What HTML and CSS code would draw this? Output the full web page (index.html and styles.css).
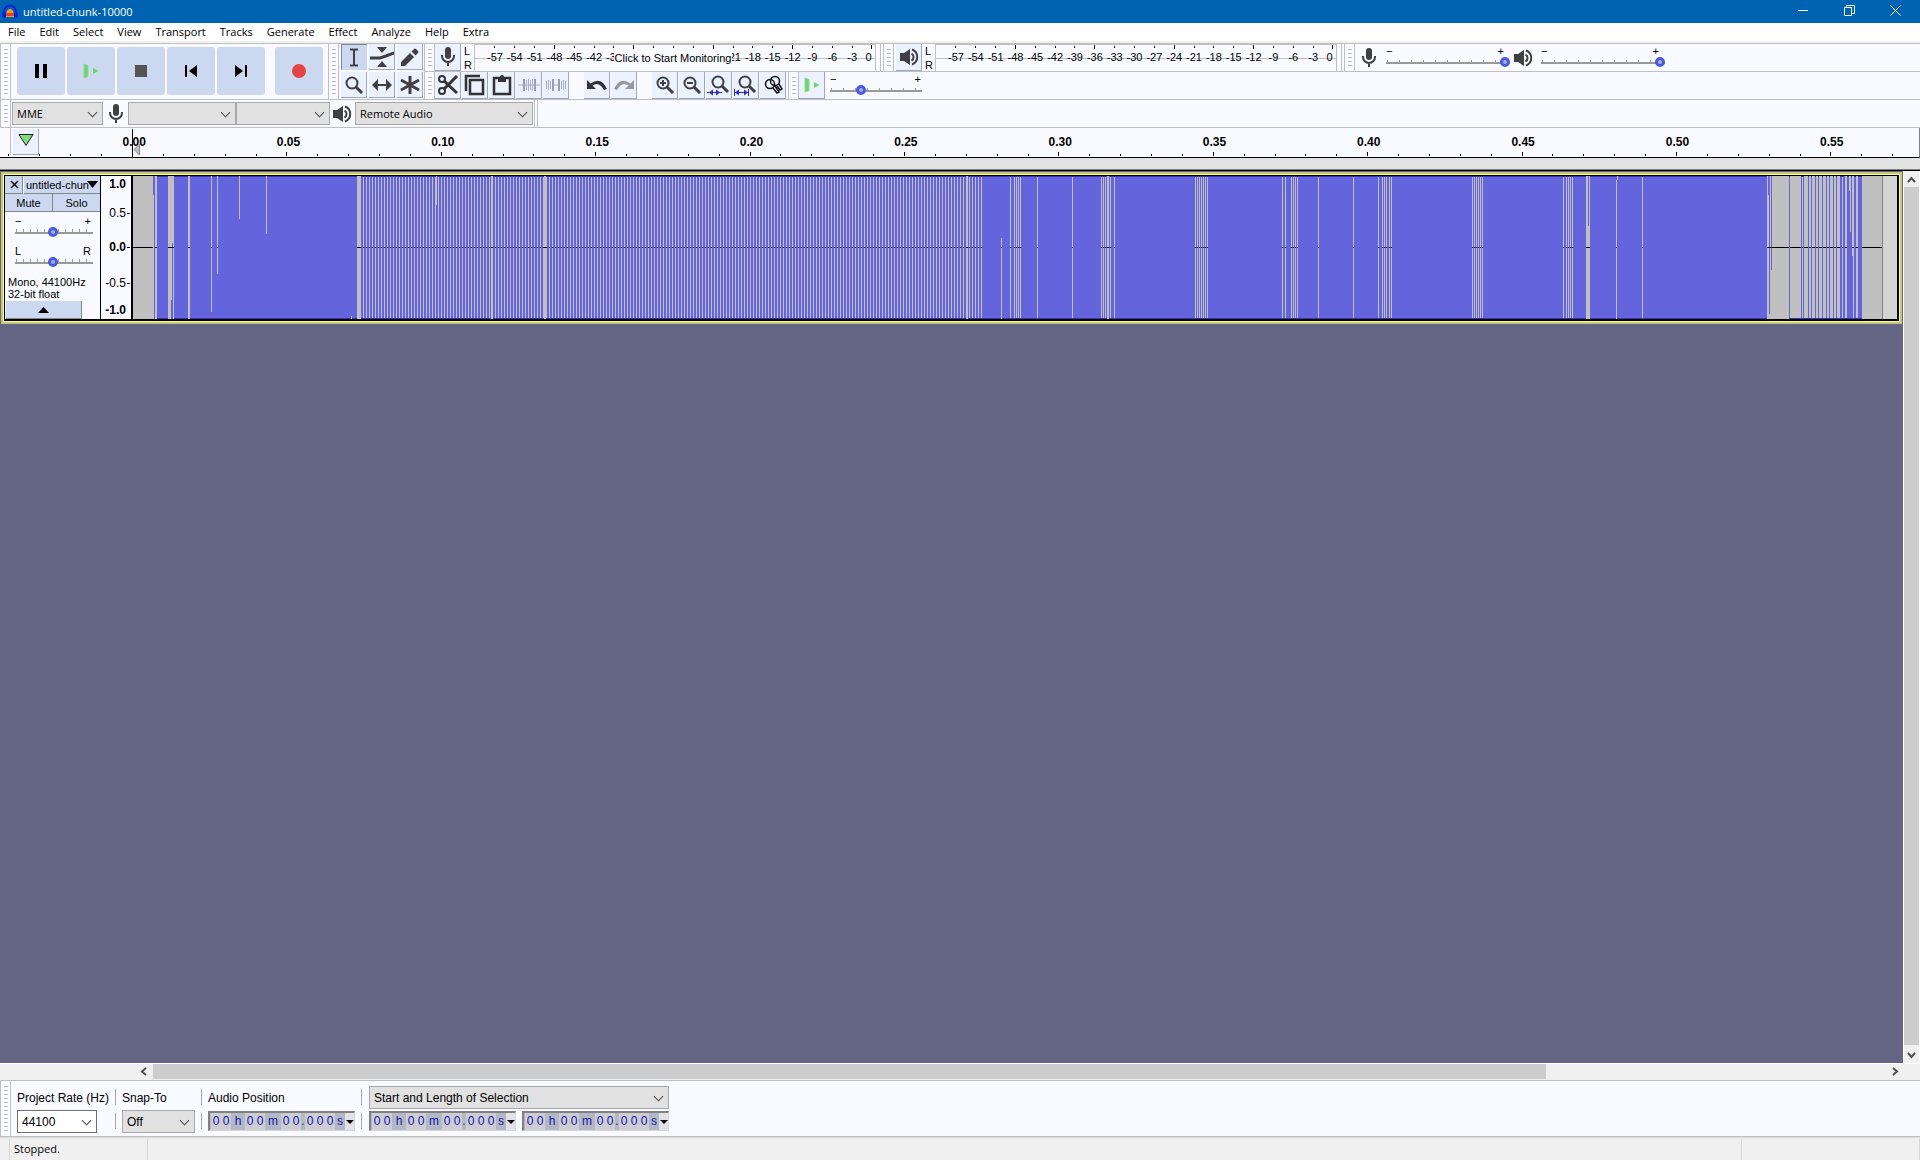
FILE: index.html
```html
<!DOCTYPE html>
<html lang="en">
<head>
<meta charset="utf-8">
<title>untitled-chunk-10000</title>
<link rel="stylesheet" href="styles.css">
</head>
<body>
<svg class="defs" aria-hidden="true">
  <symbol id="mic" viewBox="0 0 16 20"><rect x="5" y="0" width="6" height="12" rx="3" fill="#404040"/><path d="M2 8v1a6 6 0 0 0 12 0V8M8 15v4" fill="none" stroke="#404040" stroke-width="2"/></symbol>
  <symbol id="speaker" viewBox="0 0 20 18"><path d="M1 5h4l6-4v16l-6-4H1z" fill="#404040"/><path d="M12.500 5.500a4 4 0 0 1 0 7" fill="none" stroke="#404040" stroke-width="2"/><path d="M13 1.500a8 8 0 0 1 0 15" fill="none" stroke="#404040" stroke-width="2"/></symbol>
  <symbol id="play" viewBox="0 0 16 16"><path d="M1 1l4 1.500v11L1 15z" fill="#6cd46c" stroke="#8fd98f"/><path d="M10 5l5.500 3-5.500 3z" fill="#6cd46c"/></symbol>
  <symbol id="lens" viewBox="0 0 20 20"><circle cx="8" cy="8" r="5.500" fill="none" stroke="#404040" stroke-width="2"/><path d="M12 12l6 6" stroke="#404040" stroke-width="3"/></symbol>
</svg>
<div class="app">
  <header class="titlebar">
    <svg class="logo" width="16" height="16" viewBox="0 0 16 16"><path d="M2 11V8a6 6.500 0 0 1 12 0v3" fill="none" stroke="#0a1ee6" stroke-width="2"/><rect x="0" y="8" width="4" height="6" rx="2" fill="#0a1ee6"/><rect x="12" y="8" width="4" height="6" rx="2" fill="#0a1ee6"/><path d="M4 13q0-8 4-8t4 8z" fill="#f5a21b"/><path d="M4 9h8v3H4z" fill="#e8411c"/></svg>
    <h1>untitled-chunk-10000</h1>
    <button class="win" aria-label="Minimize"><svg width="11" height="11" viewBox="0 0 11 11"><path d="M0 5.500h10" stroke="#fff"/></svg></button>
    <button class="win" aria-label="Restore"><svg width="11" height="11" viewBox="0 0 11 11"><path d="M.5 2.500h7v8h-7zM2.500 2.500v-2h8v8h-3" fill="none" stroke="#fff"/></svg></button>
    <button class="win" aria-label="Close"><svg width="11" height="11" viewBox="0 0 11 11"><path d="M.5.5l10 10M10.500.5l-10 10" stroke="#fff"/></svg></button>
  </header>
  <nav class="menubar">
    <button>File</button><button>Edit</button><button>Select</button><button>View</button><button>Transport</button><button>Tracks</button><button>Generate</button><button>Effect</button><button>Analyze</button><button>Help</button><button>Extra</button>
  </nav>

  <div class="dock">
    <section class="bar tall" aria-label="Transport">
      <i class="grab"></i>
      <div class="transport">
        <button aria-label="Pause"><svg width="14" height="14" viewBox="0 0 14 14"><path d="M1 0h4v14H1zM9 0h4v14H9z"/></svg></button>
        <button aria-label="Play"><svg width="16" height="16"><use href="#play"/></svg></button>
        <button aria-label="Stop"><svg width="12" height="12"><path d="M0 0h12v12H0z" fill="#555"/></svg></button>
        <button aria-label="Skip to start"><svg width="14" height="14" viewBox="0 0 14 14"><path d="M1 1h2v12H1zM13 1v12L5 7z"/></svg></button>
        <button aria-label="Skip to end"><svg width="14" height="14" viewBox="0 0 14 14"><path d="M11 1h2v12h-2zM1 1v12l8-6z"/></svg></button>
        <button class="record" aria-label="Record"><svg width="14" height="14"><circle cx="7" cy="7" r="7" fill="#e34545"/></svg></button>
      </div>
    </section>
    <section class="bar tall" aria-label="Tools">
      <i class="grab"></i>
      <div class="tools">
        <button class="tb on" aria-label="Selection"><svg width="20" height="20" viewBox="0 0 20 20"><path d="M6 2.500h3l1 1 1-1h3M6 18.500h3l1-1 1 1h3M10 3v15" fill="none" stroke="#404040" stroke-width="2"/></svg></button>
        <button class="tb" aria-label="Envelope"><svg width="26" height="22" viewBox="0 0 26 22"><path d="M8 1h10l-5 6zM8 21h10l-5-6z" fill="#404040"/><path d="M1 12h10l6-2 8-3" fill="none" stroke="#404040" stroke-width="3"/></svg></button>
        <button class="tb" aria-label="Draw"><svg width="20" height="20" viewBox="0 0 20 20"><path d="M1 19v-4l9-9 4 4-9 9zM11.500 4.500L14 2q1-1 2 0l2 2q1 1 0 2l-2.500 2.500z" fill="#404040"/></svg></button>
        <button class="tb" aria-label="Zoom"><svg width="20" height="20"><use href="#lens"/></svg></button>
        <button class="tb" aria-label="Time shift"><svg width="22" height="20" viewBox="0 0 22 20"><path d="M1 10l6-6v5h8V4l6 6-6 6v-5H7v5z" fill="#404040"/></svg></button>
        <button class="tb" aria-label="Multi-tool"><svg width="20" height="20" viewBox="0 0 20 20"><path d="M10 1v18M1 5l18 10M1 15L19 5" stroke="#404040" stroke-width="3"/></svg></button>
      </div>
    </section>
    <div class="stack">
      <div class="row">
        <section class="bar meterbar" aria-label="Recording meter">
          <i class="grab"></i>
          <button class="tb" aria-label="Record meter"><svg width="16" height="20"><use href="#mic"/></svg></button>
          <div class="lr"><span>L</span><span>R</span></div>
          <div class="meter">
            <span>-57</span><span>-54</span><span>-51</span><span class="major">-48</span><span>-45</span><span>-42</span><span>-39</span><span class="major">-36</span><span>-33</span><span>-30</span><span>-27</span><span class="major">-24</span><span>-21</span><span>-18</span><span>-15</span><span class="major">-12</span><span>-9</span><span>-6</span><span>-3</span><span class="major zero">0</span>
            <button class="monitor">Click to Start Monitoring</button>
          </div>
        </section>
        <section class="bar meterbar playback" aria-label="Playback meter">
          <i class="grab"></i>
          <button class="tb nudge" aria-label="Playback meter"><svg width="20" height="18"><use href="#speaker"/></svg></button>
          <div class="lr"><span>L</span><span>R</span></div>
          <div class="meter">
            <span>-57</span><span>-54</span><span>-51</span><span class="major">-48</span><span>-45</span><span>-42</span><span>-39</span><span class="major">-36</span><span>-33</span><span>-30</span><span>-27</span><span class="major">-24</span><span>-21</span><span>-18</span><span>-15</span><span class="major">-12</span><span>-9</span><span>-6</span><span>-3</span><span class="major zero">0</span>
          </div>
        </section>
        <section class="bar mixer" aria-label="Mixer">
          <i class="grab"></i>
          <svg class="mixicon" width="16" height="20"><use href="#mic"/></svg>
          <div class="slider vol"><div class="ends"><span>−</span><span>+</span></div><input type="range" value="100" aria-label="Recording volume"></div>
          <svg class="spk" width="20" height="18"><use href="#speaker"/></svg>
          <div class="slider vol"><div class="ends"><span>−</span><span>+</span></div><input type="range" value="100" aria-label="Playback volume"></div>
        </section>
      </div>
      <div class="row">
        <section class="bar edit" aria-label="Edit">
          <i class="grab"></i>
          <div class="group">
            <button class="tb" aria-label="Cut"><svg width="22" height="22" viewBox="0 0 22 22"><g fill="none" stroke="#333" stroke-width="2"><circle cx="5" cy="5" r="3"/><circle cx="5" cy="17" r="3"/></g><path d="M7 7l13 12M7 15L20 2" stroke="#333" stroke-width="3"/></svg></button>
            <button class="tb" aria-label="Copy"><svg width="22" height="22" viewBox="0 0 22 22"><path d="M6 6h13v14H6zM2 17V2h14" fill="none" stroke="#333" stroke-width="2.500"/></svg></button>
            <button class="tb" aria-label="Paste"><svg width="22" height="22" viewBox="0 0 22 22"><path d="M3 4h16v16H3z" fill="none" stroke="#333" stroke-width="2.500"/><path d="M7 3h2a2 2 0 0 1 4 0h2v5H7z" fill="#333"/></svg></button>
            <button class="tb" aria-label="Trim"><svg width="22" height="16" viewBox="0 0 22 16"><path d="M0 8h22" stroke="#a8aecf"/><path d="M8.500 3v10M10.500 2v12M12.500 3v10M14.500 2v12" stroke="#a8aecf"/><path d="M6 2v12M17 2v12" stroke="#999fa8" stroke-width="2"/></svg></button>
            <button class="tb" aria-label="Silence"><svg width="22" height="16" viewBox="0 0 22 16"><path d="M8 8h6M1.500 4v8M3.500 3v10M5.500 4v8M16.500 4v8M18.500 3v10M20.500 4v8" stroke="#a8aecf"/><path d="M8 2v12M14 2v12" stroke="#999fa8" stroke-width="2"/></svg></button>
          </div>
          <div class="group">
            <button class="tb" aria-label="Undo"><svg width="22" height="16" viewBox="0 0 22 16"><path d="M1 3v9h9l-3.500-3.500Q13 4 18 13l3-1Q15-1 4.500 6.500z" fill="#333"/></svg></button>
            <button class="tb" aria-label="Redo"><svg width="22" height="16" viewBox="0 0 22 16"><path d="M21 3v9h-9l3.500-3.500Q9 4 4 13l-3-1Q7-1 17.500 6.500z" fill="#999"/></svg></button>
          </div>
          <div class="group">
            <button class="tb" aria-label="Zoom in"><svg width="20" height="20" viewBox="0 0 20 20"><use href="#lens"/><path d="M5 8h6M8 5v6" stroke="#404040" stroke-width="2"/></svg></button>
            <button class="tb" aria-label="Zoom out"><svg width="20" height="20" viewBox="0 0 20 20"><use href="#lens"/><path d="M5 8h6" stroke="#404040" stroke-width="2"/></svg></button>
            <button class="tb" aria-label="Fit selection"><svg width="24" height="22" viewBox="0 0 24 22"><use href="#lens" x="3" y="0" width="20" height="20"/><path d="M0 18.500h15" stroke="#2a2ac8"/><path d="M2 18.500l4-3v6zM13 18.500l-4-3v6z" fill="#2a2ac8"/></svg></button>
            <button class="tb" aria-label="Fit project"><svg width="24" height="22" viewBox="0 0 24 22"><use href="#lens" x="3" y="0" width="20" height="20"/><path d="M0 18.500h15M.5 15v7M14.500 15v7" stroke="#2a2ac8"/><path d="M1 18.500l4-3v6zM14 18.500l-4-3v6z" fill="#2a2ac8"/></svg></button>
            <button class="tb" aria-label="Toggle zoom"><svg width="20" height="20" viewBox="0 0 20 20"><g fill="none" stroke="#111" stroke-width="1.500"><circle cx="7" cy="9" r="4.500"/><circle cx="12" cy="6" r="4.500"/><path d="M10 13l4 5 2-1-4-6M14 11l3 4 2-1-3-5"/></g></svg></button>
          </div>
        </section>
        <section class="bar" aria-label="Play at speed">
          <i class="grab"></i>
          <button class="tb" aria-label="Play at speed"><svg width="16" height="16"><use href="#play"/></svg></button>
          <div class="slider speed"><div class="ends"><span>−</span><span>+</span></div><input type="range" value="32" aria-label="Playback speed"></div>
        </section>
      </div>
    </div>
  </div>

  <section class="bar devices" aria-label="Devices">
    <i class="grab"></i>
    <label class="pick host"><select aria-label="Audio host"><option>MME</option></select></label>
    <svg class="devmic" width="16" height="20"><use href="#mic"/></svg>
    <label class="pick recdev"><select aria-label="Recording device"><option></option></select></label>
    <label class="pick channels"><select aria-label="Recording channels"><option></option></select></label>
    <svg class="devspk" width="20" height="18"><use href="#speaker"/></svg>
    <label class="pick playdev"><select aria-label="Playback device"><option>Remote Audio</option></select></label>
    <i class="tail"></i>
  </section>

  <div class="timeline">
    <svg class="ticks" viewBox="0 0 1919 29" preserveAspectRatio="none"><path id="ticks" fill="none" stroke="#000"/></svg>
    <div class="pin"><button class="tb" aria-label="Pinned play head"><svg width="16" height="14" viewBox="0 0 16 14"><path d="M1 1.500h14L8 12.500z" fill="#7fdc7f" stroke="#222"/></svg></button></div>
    <div class="times"><span>0.00</span><span>0.05</span><span>0.10</span><span>0.15</span><span>0.20</span><span>0.25</span><span>0.30</span><span>0.35</span><span>0.40</span><span>0.45</span><span>0.50</span><span>0.55</span></div>
    <svg class="cursor" width="9" height="28" viewBox="0 0 9 28"><path d="M.5 0v28" stroke="#000"/><path d="M7.500 15v11L2 20.500z" fill="#c0c0c0" stroke="#888"/></svg>
  </div>
  <div class="scrub"></div>

  <main class="workspace">
    <div class="tracks">
      <article class="track">
        <div class="panel">
          <div class="pair head"><button aria-label="Close track"><svg width="9" height="9" viewBox="0 0 9 9"><path d="M1 1l7 7M8 1L1 8" stroke="#000" stroke-width="1.500"/></svg></button><button class="name">untitled-chun<svg width="11" height="7"><path d="M0 0h11L5.500 7z"/></svg></button></div>
          <div class="pair"><button>Mute</button><button>Solo</button></div>
          <div class="slider small"><div class="ends"><span>−</span><span>+</span></div><input type="range" value="49" aria-label="Gain"></div>
          <div class="slider small"><div class="ends"><span>L</span><span>R</span></div><input type="range" value="49" aria-label="Pan"></div>
          <p>Mono, 44100Hz<br>32-bit float</p>
          <button class="collapse" aria-label="Collapse track"><svg width="11" height="6"><path d="M0 6h11L5.500 0z"/></svg></button>
        </div>
        <div class="scale"><b>1.0</b><span class="mark">0.5</span><b class="mark">0.0</b><span class="mark">-0.5</span><b>-1.0</b></div>
        <svg class="wave" viewBox="0 0 1764 143" preserveAspectRatio="none" role="img" aria-label="Waveform">
          <rect width="1764" height="143" fill="#c0c0c0"/>
          <path fill="#6464dc" d="M24 0H1729V143H24z"/>
          <path fill="#3232c8" d="M24 0H1729V1H24zM24 142H1729V143H24z"/>
          <path id="gaps" fill="#c0c0c0"/>
          <path id="peaks" fill="#6464dc"/>
          <path id="zero" fill="#000"/>
          <path fill="#3232c8" d="M1656 142H1729V143H1656z"/>
          <path fill="#808080" d="M1749 0h1v143h-1z"/><path fill="#d4d4d4" d="M1750 0h14v143h-14z"/>
        </svg>
      </article>
    </div>
    <div class="vscroll"><svg width="15" height="16" viewBox="0 0 15 16"><path d="M4 11l3.500-4 3.500 4" fill="none" stroke="#505050" stroke-width="2"/></svg><i></i><svg width="15" height="18" viewBox="0 0 15 18"><path d="M4 8l3.500 4L11 8" fill="none" stroke="#505050" stroke-width="2"/></svg></div>
  </main>
  <div class="hscroll"><svg width="16" height="15" viewBox="0 0 16 15"><path d="M9 4L5 7.500 9 11" fill="none" stroke="#505050" stroke-width="2"/></svg><div><i></i></div><svg width="16" height="15" viewBox="0 0 16 15"><path d="M6 4l4 3.500L6 11" fill="none" stroke="#505050" stroke-width="2"/></svg></div>

  <section class="bar selection" aria-label="Selection">
    <i class="grab"></i>
    <div class="field rate"><label for="rate">Project Rate (Hz)</label><span class="pick combo"><input id="rate" value="44100"></span></div>
    <div class="seps"><i></i><i></i></div>
    <div class="field snap"><label for="snap">Snap-To</label><span class="pick"><select id="snap"><option>Off</option></select></span></div>
    <div class="seps"><i></i><i></i></div>
    <div class="field"><span class="cap">Audio Position</span>
      <div class="time"><s><b>0</b><b>0</b></s><u>h</u><s><b>0</b><b>0</b></s><u class="m">m</u><s><b>0</b><b>0</b></s><u class="dot">.</u><s><b>0</b><b>0</b><b>0</b></s><u class="sec">s</u><button aria-label="Format"></button></div>
    </div>
    <div class="seps last"><i></i><i></i></div>
    <div class="field">
      <span class="pick mode"><select aria-label="Selection mode"><option>Start and Length of Selection</option></select></span>
      <div class="duo">
        <div class="time"><s><b>0</b><b>0</b></s><u>h</u><s><b>0</b><b>0</b></s><u class="m">m</u><s><b>0</b><b>0</b></s><u class="dot">.</u><s><b>0</b><b>0</b><b>0</b></s><u class="sec">s</u><button aria-label="Format"></button></div>
        <div class="time"><s><b>0</b><b>0</b></s><u>h</u><s><b>0</b><b>0</b></s><u class="m">m</u><s><b>0</b><b>0</b></s><u class="dot">.</u><s><b>0</b><b>0</b><b>0</b></s><u class="sec">s</u><button aria-label="Format"></button></div>
      </div>
    </div>
  </section>
  <footer class="status"><span class="lead"></span><span class="state">Stopped.</span><span class="msg"></span><span class="rest"></span></footer>
</div>
<script src="script.js"></script>
</body>
</html>
```
FILE: styles.css
```css
* { box-sizing: border-box; }
body { margin: 0; font: 12px/16px "Liberation Sans", Arial, sans-serif; color: #000; }
button, select, input { font: inherit; color: inherit; margin: 0; padding: 0; border: 0; border-radius: 0; background: none; }
svg { display: block; flex: none; }
.defs { position: absolute; width: 0; height: 0; }
.app { display: flex; flex-direction: column; min-height: 100vh; background: #f8faff; }

.titlebar { display: flex; align-items: center; height: 23px; background: #0063b1; color: #fff; padding: 0 2px; }
.titlebar h1 { flex: 1; margin: 0 0 0 5px; font: 11px/16px "Open Sans", sans-serif; }
.win { width: 46px; height: 23px; display: flex; justify-content: center; align-items: center; padding-bottom: 3px; }

.menubar { display: flex; gap: 14px; height: 20px; padding-left: 8px; background: #fff; border-bottom: 2px solid #f0f0f0; font: 11px/18px "Open Sans", sans-serif; }

.dock { display: flex; border-top: 1px solid #c0c0c0; }
.bar { display: flex; align-items: stretch; min-width: 0; }
.tall { height: 56px; border-bottom: 1px solid #c0c0c0; }
.grab { flex: none; width: 11px; border: solid #c0c0c0; border-width: 0 1px; background: repeating-linear-gradient(#c0c0c0 0 1px, transparent 1px 4px) 3px 5px / 4px calc(100% - 9px) no-repeat; }
.transport { display: flex; gap: 2px; padding: 3px 5px 0 6px; }
.transport button { width: 48px; height: 48px; border-radius: 3px; background: #ccd8f0; display: flex; align-items: center; justify-content: center; }
.transport .record { margin-left: 8px; }
.tools { display: grid; grid-template-columns: repeat(3, 26px); grid-auto-rows: 26px; gap: 2px; padding: 0 1px 0 2px; }
.tb { flex: none; width: 26px; height: 27px; background: #ebf1ff; border: solid #a0a8b8; border-width: 0 1px 1px 0; display: flex; align-items: center; justify-content: center; overflow: hidden; }
.tools .tb { height: 26px; }
.tb.on { background: #ccd8f0; border-color: #808898 #ccd8f0 #ccd8f0 #808898; border-width: 1px; }
.nudge { margin-left: 2px; }
.stack { flex: 1; min-width: 0; }
.row { display: flex; height: 28px; border-bottom: 1px solid #c0c0c0; }
.meterbar { flex: 0 1 457px; border-right: 1px solid #c0c0c0; padding-right: 4px; margin-right: 2px; }
.playback { flex-basis: 459px; }
.lr { flex: none; width: 13px; padding-left: 3px; font-size: 11px; line-height: 14px; }
.lr span { display: block; }
.meter { position: relative; display: flex; flex: 1; min-width: 0; padding-left: 10px; font-size: 11px; border: solid #c0c0c0; border-width: 1px 1px 0; background: linear-gradient(#c0c0c0, #c0c0c0) 0 13px / 100% 1px no-repeat; }
.meter > span { flex: 1; min-width: 0; display: flex; flex-direction: column; align-items: center; line-height: 16px; }
.meter > span::before { content: ""; width: 1px; height: 2px; margin: 1px 0 1px; background: #000; }
.meter > .major::before { height: 4px; margin: 0; }
.meter > .zero { flex: 0 0 13px; }
.meter > .zero::before { align-self: flex-end; margin-right: 3px; }
.monitor { position: absolute; left: 139px; top: 6px; width: 118px; height: 14px; line-height: 14px; background: #f8faff; white-space: nowrap; }

.slider { flex: none; display: flex; flex-direction: column; }
.ends { display: flex; justify-content: space-between; height: 10px; line-height: 12px; font-size: 11px; }
.slider input { appearance: none; display: block; width: 100%; height: 12px; background: linear-gradient(#999, #999) 0 7px / 100% 2px no-repeat, repeating-linear-gradient(90deg, #999 0 1px, transparent 1px 12px) 1px 5px / 100% 2px no-repeat; }
.slider input::-webkit-slider-thumb { appearance: none; width: 10px; height: 10px; margin-top: 1px; border: 3px solid #4a58e8; border-radius: 5px; background: #b0b0b8; }
.slider input::-moz-range-thumb { width: 4px; height: 4px; border: 3px solid #4a58e8; border-radius: 5px; background: #b0b0b8; }
.vol { width: 124px; padding-top: 1px; }
.vol .ends { padding-right: 6px; }
.mixer { align-items: flex-start; }
.mixer .grab { height: 27px; }
.mixicon { margin: 4px 9px 0 6px; }
.spk { margin: 5px 8px 0 3px; }
.speed { width: 92px; margin-left: 5px; padding-top: 1px; }
.speed .ends { padding-right: 1px; }
.edit { padding-right: 2px; }
.group { display: flex; gap: 1px; }
.group + .group { margin-left: 15px; }

.devices { height: 28px; border-bottom: 1px solid #c0c0c0; font: 11px/16px "Open Sans", sans-serif; }
.pick { position: relative; display: flex; height: 23px; border: 1px solid #a8a8a8; background: #e1e1e1; }
.pick select, .pick input { appearance: none; width: 100%; padding-left: 4px; outline: 0; }
.pick::after { content: ""; position: absolute; right: 6px; top: 6px; width: 6px; height: 6px; border: solid #505050; border-width: 0 1px 1px 0; transform: rotate(45deg); pointer-events: none; }
.devices .pick { margin-top: 2px; }
.host { width: 91px; margin-left: 1px; }
.devmic { margin: 4px 4px 0 5px; }
.recdev { width: 108px; }
.channels { width: 94px; }
.devspk { margin: 5px 3px 0 2px; }
.playdev { width: 178px; }
.tail { width: 4px; margin-left: 1px; border: solid #c0c0c0; border-width: 0 1px; }

.timeline { position: relative; display: flex; height: 30px; border-bottom: 1px solid #000; border-right: 1px solid #808080; }
.ticks { position: absolute; inset: 0; width: 100%; height: 29px; shape-rendering: crispEdges; }
.pin { flex: none; width: 40px; padding: 1px 0 0 13px; background: linear-gradient(#c0c0c0, #c0c0c0) 10px 0 / 1px 27px no-repeat; }
.pin .tb { height: 26px; align-items: flex-start; padding-top: 4px; position: relative; }
.times { flex: 1; display: flex; padding: 6px 10px 0 17px; font-weight: bold; }
.times span { flex: 1; text-align: center; }
.cursor { position: absolute; left: 132px; top: 1px; }
.scrub { height: 13px; background: #e3e3e3; border-bottom: 1px solid #000; box-shadow: inset 0 -1px #808080; }

.workspace { flex: 1; display: flex; background: #646684; }
.tracks { flex: 1; min-width: 0; padding: 1px; }
.track { display: flex; border: 2px solid #c6c683; box-shadow: inset 0 0 0 1px #ffff80, inset 0 0 0 3px #000; padding: 2px 3px 3px 2px; background: #000; }
.panel { flex: none; width: 96px; height: 143px; background: #f8faff; border-right: 1px solid #000; font-size: 11px; }
.pair { display: flex; height: 18px; }
.pair button { flex: 1; background: #ccd8f0; border: solid #808890; border-width: 0 1px 1px 0; font-size: 11px; line-height: 16px; display: flex; align-items: center; justify-content: center; }
.pair button:last-child { border-right: 0; }
.pair.head button { flex: 0 0 18px; padding-left: 2px; }
.pair.head .name { flex: 1; justify-content: flex-start; margin-left: 1px; padding-left: 2px; white-space: nowrap; overflow: hidden; }
.name svg { margin-left: -2px; }
.small { width: 78px; margin: 3px 0 0 10px; }
.small .ends { padding-right: 2px; }
.small input { background: linear-gradient(#999, #999) 0 7px / 100% 2px no-repeat, repeating-linear-gradient(90deg, #999 0 1px, transparent 1px 7px) 1px 4px / 100% 3px no-repeat; }
.small + .small { margin-top: 8px; }
.panel p { margin: 9px 0 0 3px; line-height: 12px; }
.collapse { width: 76px; height: 18px; margin: 1px 0 0 1px; background: #ccd8f0; border: solid #808890; border-width: 0 1px 1px 0; display: flex; align-items: center; justify-content: center; }
.scale { flex: none; width: 30px; height: 143px; margin-right: 2px; background: #f8faff; display: grid; grid-template-rows: 29px 34px 36px 27px 16px; text-align: right; padding-right: 5px; }
.scale > * { position: relative; display: block; }
.scale .mark::after { content: ""; position: absolute; right: -4px; top: 8px; width: 3px; height: 1px; background: #000; }
.wave { flex: 1 1 0; min-width: 0; height: 143px; shape-rendering: crispEdges; }

.vscroll { flex: none; width: 17px; background: #f0f0f0; border: solid #fff; border-width: 0 1px; display: flex; flex-direction: column; }
.vscroll i { flex: 1; background: #cdcdcd; }
.hscroll { display: flex; height: 18px; padding: 0 17px 1px 137px; background: #f0f0f0; border-top: 1px solid #fff; border-bottom: 1px solid #c0c0c0; }
.hscroll div { flex: 1; }
.hscroll i { display: block; width: calc(80% + 6px); height: 15px; background: #cdcdcd; }

.selection { height: 56px; border-bottom: 1px solid #c0c0c0; }
.field { flex: none; display: grid; grid-template-rows: 23px 24px; row-gap: 1px; padding-top: 5px; }
.field label, .cap { align-self: center; line-height: 16px; white-space: nowrap; }
.rate { width: 92px; margin-left: 6px; }
.combo { width: 80px; border-color: #707070; background: #fff; }
.snap { width: 73px; }
.seps { flex: none; width: 13px; padding: 8px 6px 0; }
.seps.last { width: 14px; }
.seps i { display: block; width: 1px; height: 16px; margin-bottom: 8px; background: #a8a8a8; }
.duo { display: flex; gap: 6px; }
.time { display: flex; width: 147px; height: 20px; margin-top: 1px; padding-left: 1px; background: #b4b8c4; border: solid #808080; border-width: 2px 1px 1px 2px; border-right-color: #d8d8d8; border-bottom-color: #d8d8d8; color: #1414b4; line-height: 17px; }
.time s { display: flex; background: #cdcdd2; text-decoration: none; }
.time b { width: 10px; font-weight: normal; text-align: center; }
.time u { width: 14px; text-align: center; text-decoration: none; }
.time .m { width: 16px; }
.time .dot { width: 4px; }
.time .sec { width: 10px; }
.time button { flex: 1; background: #e1e1e8; display: flex; align-items: center; justify-content: center; }
.time button::before { content: ""; border: solid transparent; border-width: 4px 4px 0; border-top-color: #000; }

.status { display: flex; height: 23px; background: #f0f0f0; border-top: 1px solid #d8d8d8; font: 11px/20px "Open Sans", sans-serif; }
.status span { border-right: 1px solid #d8d8d8; margin-top: 1px; }
.lead { width: 10px; }
.state { width: 138px; padding-left: 4px; }
.msg { flex: 1; }
.rest { width: 178px; }
```
FILE: script.js
```js
// Draws the time ruler and the waveform of the open clip.
const bar = (x, w, top, bottom) => `M${x} ${top}h${w}V${bottom}h${-w}z`;

let ticks = "";
for (let i = -4; i <= 57; i++) {
  const x = Math.round(132 + i * 30.88) + 0.5;
  ticks += `M${x} ${i % 5 ? 26 : 24}V28`;
}
document.getElementById("ticks").setAttribute("d", ticks);

// Silent columns: [x, width, top, bottom] in window pixels from the clip's edge.
const ORIGIN = 133;
const gaps = [
  [155, 2], [168, 6], [188, 2], [211, 1, 0, 136], [217, 1, 0, 98], [239, 1, 0, 43],
  [266, 1, 0, 58], [351, 1, 140, 143], [357, 4], [436, 1, 0, 29], [491, 2], [544, 2],
  [966, 2], [1001, 1, 62, 143], [1107, 2], [1586, 4], [1616, 1, 4, 143], [1617, 1, 0, 4],
  [1767, 22], [1790, 11], [1802, 1], [1804, 4], [1809, 2], [1812, 3], [1816, 2], [1819, 3],
  [1823, 3], [1827, 2], [1830, 3], [1834, 2], [1837, 3], [1842, 1], [1845, 2],
  [1849, 1, 0, 15], [1850, 1, 0, 56], [1852, 2], [1856, 2]
];
for (let x = 363; x < 984; x += 3) gaps.push([x, 1]);
[1010, 1014, 1016, 1018, 1020, 1037, 1072, 1101, 1103, 1105, 1110, 1114,
  1195, 1197, 1199, 1201, 1203, 1205, 1207, 1282, 1285, 1291, 1293, 1295, 1297,
  1318, 1353, 1378, 1382, 1384, 1386, 1389, 1391, 1472, 1474, 1476, 1478, 1480, 1482,
  1563, 1566, 1568, 1570, 1572, 1642].forEach(x => gaps.push([x, 1]));

const peaks = [
  [153, 1, 0, 19], [154, 1, 0, 143], [171, 1, 124, 143], [172, 1, 67, 143],
  [1588, 1, 0, 50], [1768, 1, 0, 19], [1769, 1, 0, 138], [1771, 1, 0, 94],
  [1844, 1, 0, 32], [1852, 1, 80, 143]
];

let silent = "";
let zero = bar(0, 20, 71, 72) + bar(1729, 20, 71, 72);
for (const [x, w, top, bottom] of gaps) {
  const inset = w === 1 && x > 360 ? 1 : 0;
  const from = top === undefined ? inset : top;
  const to = bottom === undefined ? 143 - inset : bottom;
  silent += bar(x - ORIGIN, w, from, to);
  if (from < 71 && to > 71) zero += bar(x - ORIGIN, w, 71, 72);
}
document.getElementById("gaps").setAttribute("d", silent);
document.getElementById("zero").setAttribute("d", zero);
document.getElementById("peaks").setAttribute("d", peaks.map(([x, w, a, b]) => bar(x - ORIGIN, w, a, b)).join(""));
```
